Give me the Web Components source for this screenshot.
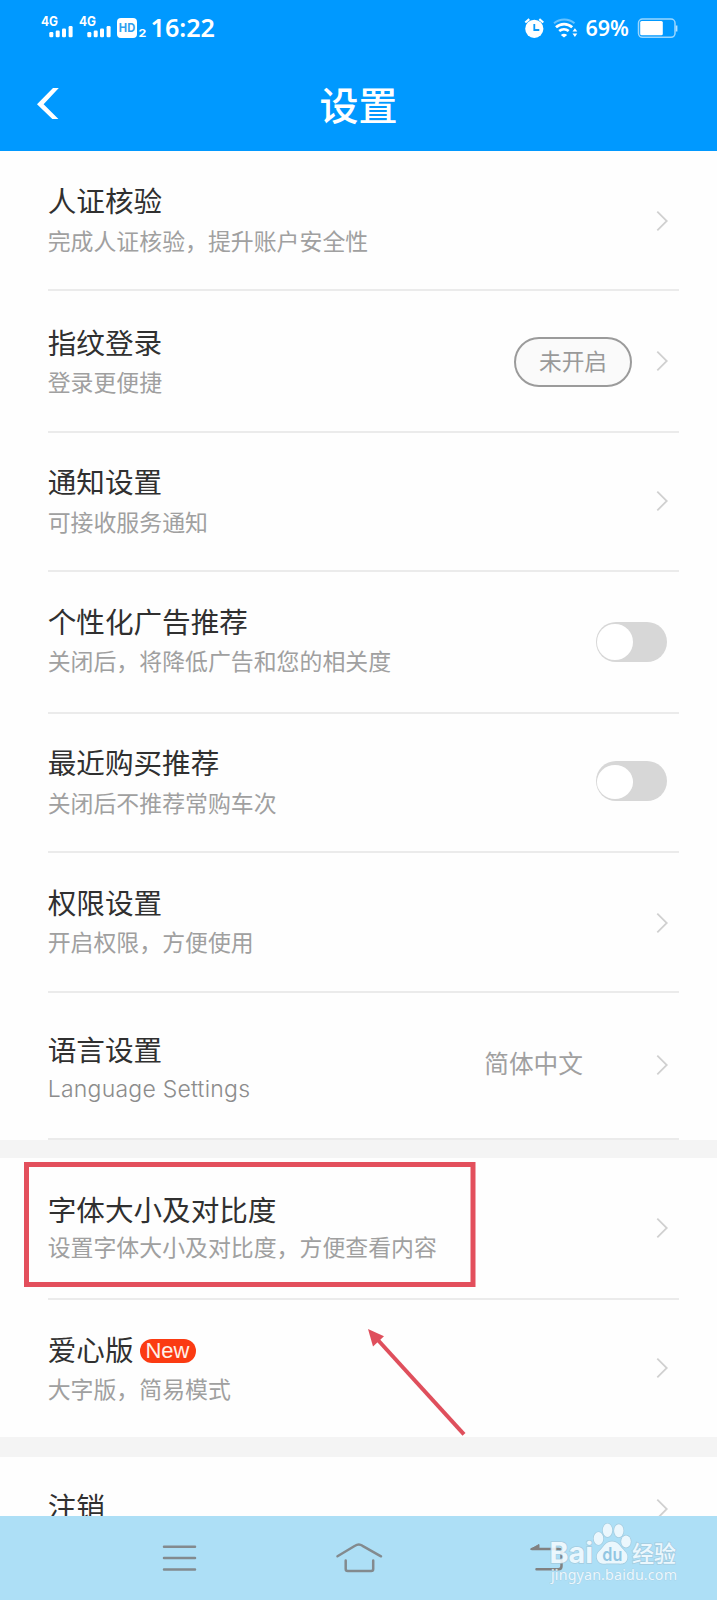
<!DOCTYPE html>
<html lang="zh-CN">
<head>
<meta charset="utf-8">
<title>设置</title>
<style>
html,body{margin:0;padding:0}
body{width:717px;height:1600px;overflow:hidden;background:#fefefe;font-family:"Noto Sans CJK SC",sans-serif}
</style>
</head>
<body>
<settings-screen></settings-screen>
<script>
const define = (name, html) => {
  const t = document.createElement('template');
  t.innerHTML = html;
  customElements.define(name, class extends HTMLElement {
    constructor() {
      super();
      this.attachShadow({ mode: 'open' }).appendChild(t.content.cloneNode(true));
    }
  });
};

define('status-bar', `
<style>
:host{display:flex;justify-content:space-between;height:56px}
svg{display:block}
text{fill:#fff}
</style>
<svg width="230" height="56" fill="#fff">
  <g font-family="Inter,sans-serif" font-weight="700" font-size="12.5">
    <text x="41" y="26.3" textLength="17" lengthAdjust="spacingAndGlyphs">4G</text>
    <text x="79" y="26.3" textLength="17" lengthAdjust="spacingAndGlyphs">4G</text>
  </g>
  <g id="b"><rect x="49.3" y="32" width="4" height="5.3" rx="1.2"/><rect x="55.7" y="30.5" width="4" height="6.8" rx="1.2"/><rect x="62" y="28.5" width="4" height="8.8" rx="1.2"/><rect x="68.6" y="26" width="4" height="11.3" rx="1.2"/></g>
  <use href="#b" x="38"/>
  <rect x="117" y="18" width="20" height="20" rx="4"/>
  <text x="118.8" y="32.2" font-family="Inter,sans-serif" font-weight="700" font-size="12" textLength="16.4" lengthAdjust="spacingAndGlyphs" style="fill:#2f9fee">HD</text>
  <text x="138.4" y="37" font-family="Inter,sans-serif" font-weight="700" font-size="10.8" textLength="7.8" lengthAdjust="spacingAndGlyphs">2</text>
  <text x="150.5" y="36.7" font-family="Noto Sans,sans-serif" font-weight="600" font-size="24.6" textLength="64.5" lengthAdjust="spacingAndGlyphs">16:22</text>
</svg>
<svg width="197" height="56" fill="none" stroke="#fff">
  <circle cx="14.3" cy="28.8" r="9.1" fill="#fff" stroke="none"/>
  <path d="M5.3 22.5l4-3.3M23.3 22.5l-4-3.3" stroke-width="2.2"/>
  <path d="M14.3 24v6h5" stroke="#0a98f8" stroke-width="1.8"/>
  <path d="M34 23.3a15.5 15.5 0 0 1 20.5 0" stroke-width="2" opacity=".4"/>
  <path d="M36 27.2a12 12 0 0 1 16.2 0M39.2 31a7.5 7.5 0 0 1 9.5 0" stroke-width="2.7"/>
  <path d="M40.8 35l3.2 2.6 3.2-2.6a5 5 0 0 0-6.4 0z" fill="#fff" stroke="none"/>
  <path d="M52.5 31.5l2.4-3.3 2.4 3.3zM52.5 33.6l2.4 3.3 2.4-3.3z" fill="#fff" stroke="none"/>
  <text x="65.4" y="36.2" stroke="none" font-family="Noto Sans,sans-serif" font-weight="600" font-size="21" textLength="43.5" lengthAdjust="spacingAndGlyphs">69%</text>
  <rect x="118.5" y="19" width="36.5" height="18.3" rx="4" stroke-width="1.5" opacity=".6"/>
  <rect x="120.2" y="21" width="22.6" height="14.3" rx="1.5" fill="#fff" stroke="none"/>
  <path d="M156.6 25.5v6" stroke-width="1.6" opacity=".7"/>
</svg>`);

define('title-bar', `
<style>
:host{display:grid;grid-template-columns:96px 1fr 96px;align-items:center;height:95px}
h1{margin:-2px 0 0;text-align:center;color:#fff;font-size:39px;line-height:56px;font-weight:500}
svg{display:block}
</style>
<svg width="96" height="95"><path d="M37 48.2L53 32h5.8L43.6 48.2 58.4 63H52.3z" fill="#fff"/></svg>
<h1><slot></slot></h1>`);

define('chevron-mark', `
<style>:host{display:block}svg{display:block}</style>
<svg width="12" height="22"><path d="M1.3 1.6L10.8 11 1.3 20.4" fill="none" stroke="#d0d0d0" stroke-width="1.8"/></svg>`);

define('toggle-switch', `
<style>
:host{display:flex;align-items:center;box-sizing:border-box;width:71.5px;height:40px;padding-left:1.7px;border-radius:20px;background:#d7d7d7;margin-right:1px}
i{width:36.3px;height:var(--knob,36.5px);border-radius:50%;background:#fff;margin-top:var(--drop,0)}
</style><i></i>`);

define('state-pill', `
<style>
:host{display:flex;align-items:center;justify-content:center;box-sizing:border-box;width:118px;height:50px;border:2px solid #9b9b9b;border-radius:25px;background:#fafafa;color:#999;font-size:22.7px;line-height:40px;margin:2px 24px 0 0;padding-bottom:3px}
</style><slot></slot>`);

define('new-badge', `
<style>
:host{display:flex;align-items:center;justify-content:center;width:56px;height:24px;border-radius:12px;background:#fb3b12;color:#fff0e8;font:400 22px/24px "Liberation Sans",sans-serif;margin:3px 0 0 6px}
</style><slot></slot>`);

define('setting-row', `
<style>
:host{display:flex;justify-content:space-between;box-sizing:border-box;height:var(--h);margin:0 38px 0 48px;border-bottom:2px solid var(--line,#ebebeb)}
.text{padding-top:calc(var(--t) - 20.8px);margin-left:-.3px}
.name{display:flex;align-items:center;height:40px;font-size:28.6px;line-height:40px;color:#303030;white-space:nowrap}
.note{font-size:22.9px;line-height:40px;color:#a0a0a0;font-weight:400;margin-top:calc(var(--shift,0px) - .8px);white-space:nowrap}
.side{display:flex;align-items:center;height:50px;margin-top:calc(var(--m) - 25px);padding-right:11px}
</style>
<div class="text"><div class="name"><slot name="name"></slot></div><div class="note"><slot name="note"></slot></div></div>
<div class="side"><slot></slot></div>`);

define('section-gap', `<style>:host{display:block;height:var(--h);background:#f4f4f4}</style>`);

define('nav-bar', `
<style>
:host{display:grid;grid-template-columns:repeat(3,179px);justify-content:center;height:84px;background:#addff6;position:relative}
svg{display:block}
path{fill:none;stroke:#838a8e;stroke-width:2.5;stroke-linecap:round;stroke-linejoin:round}
</style>
<svg width="179" height="84"><path d="M74 30.8h31M74 42h31M74 53.5h31"/></svg>
<svg width="179" height="84"><path d="M68.5 40.3L86 29.8Q89.8 27.2 93.5 29.8L112 40.3M76.7 44.5v8.5q0 2 2 2h23.5q2 0 2-2v-8.5"/></svg>
<svg width="179" height="84"><path d="M84 33h26.5q3 0 3 3v14q0 3.3-3 3.3H88.5" style="stroke:#818181"/><path d="M82.8 33L91 28.5V33z" style="fill:#818181;stroke:#818181;stroke-width:1"/></svg>`);

define('water-mark', `
<style>
:host{position:absolute;left:545px;top:1518px}
svg{display:block}
.w{fill:#f4fbff;stroke:#a3c9dc;stroke-width:1.4;paint-order:stroke}
</style>
<svg width="140" height="72" opacity=".88">
  <g class="w">
    <text x="4.5" y="45.2" font-family="Inter,sans-serif" font-weight="700" font-size="28.5" textLength="43.5" lengthAdjust="spacingAndGlyphs">Bai</text>
    <ellipse cx="53.5" cy="20.5" rx="4.8" ry="6.4"/><ellipse cx="62.5" cy="12.3" rx="4.7" ry="6.7"/><ellipse cx="73.8" cy="12.7" rx="4.7" ry="6.5"/><ellipse cx="81" cy="23.5" rx="4.8" ry="6"/>
    <path d="M67 23.5c-6 0-7.5 4-10.5 7.3-3 3.2-5.5 5.2-4.5 9.7 1.2 5.3 6 5.5 9.5 5h11.5c3.5.5 8.3.2 9.3-5 .9-4.5-2-6.6-4.8-9.7-3-3.3-4.5-7.3-10.500-7.3z"/>
    <text x="87" y="43.5" font-family="Noto Sans CJK SC,sans-serif" font-weight="500" font-size="22.5" textLength="44" lengthAdjust="spacingAndGlyphs">经验</text>
  </g>
  <text x="57.3" y="42.5" font-family="Inter,sans-serif" font-weight="600" font-size="18" fill="#8fc3e0" textLength="20" lengthAdjust="spacingAndGlyphs">du</text>
  <text x="6" y="61.5" class="w" style="stroke-width:.6" font-family="Noto Sans,sans-serif" font-size="14.3" textLength="126" lengthAdjust="spacing">jingyan.baidu.com</text>
</svg>`);

define('guide-marks', `
<style>
:host{position:absolute;left:24px;top:1162px}
svg{display:block}
</style>
<svg width="460" height="280"><rect x="2.5" y="2.5" width="446.5" height="120" fill="none" stroke="#e34f5c" stroke-width="5"/>
<path d="M440 272.3L353 177" stroke="#df4f5c" stroke-width="4" fill="none"/><path d="M344 167l16 7.3-11 10.2z" fill="#df4f5c"/></svg>`);

define('settings-screen', `
<style>
:host{display:flex;flex-direction:column;position:relative;width:717px;height:1600px;overflow:hidden;background:#fefefe}
header{background:#0099ff;height:151px;flex:none}
main{height:1365px;overflow:hidden;flex:none}
</style>
<header><status-bar></status-bar><title-bar>设置</title-bar></header>
<main>
<setting-row style="--h:140px;--t:50px;--shift:.5px;--m:70px"><span slot="name">人证核验</span><span slot="note">完成人证核验，提升账户安全性</span><chevron-mark></chevron-mark></setting-row>
<setting-row style="--h:142px;--t:52px;--m:70px"><span slot="name">指纹登录</span><span slot="note">登录更便捷</span><state-pill>未开启</state-pill><chevron-mark></chevron-mark></setting-row>
<setting-row style="--h:139px;--t:49px;--shift:.5px;--m:68px"><span slot="name">通知设置</span><span slot="note">可接收服务通知</span><chevron-mark></chevron-mark></setting-row>
<setting-row style="--h:142px;--t:50px;--m:70px"><span slot="name">个性化广告推荐</span><span slot="note">关闭后，将降低广告和您的相关度</span><toggle-switch></toggle-switch></setting-row>
<setting-row style="--h:139px;--t:49px;--shift:.5px;--m:67px"><span slot="name">最近购买推荐</span><span slot="note">关闭后不推荐常购车次</span><toggle-switch style="--knob:34px;--drop:2px"></toggle-switch></setting-row>
<setting-row style="--h:140px;--t:50px;--m:69.5px"><span slot="name">权限设置</span><span slot="note">开启权限，方便使用</span><chevron-mark></chevron-mark></setting-row>
<setting-row style="--h:147px;--t:57.2px;--m:72px;--shift:.5px"><span slot="name">语言设置</span><span slot="note" style="display:block;font:300 23px/40px Inter,sans-serif;letter-spacing:.24px;color:#8c8c8c">Language Settings</span><span style="font-size:24.7px;line-height:40px;color:#a0a0a0;margin:-6px 73px 0 0">简体中文</span><chevron-mark></chevron-mark></setting-row>
<section-gap style="--h:18px"></section-gap>
<setting-row style="--h:142px;--t:52px;--m:70px;--shift:-2.5px"><span slot="name">字体大小及对比度</span><span slot="note">设置字体大小及对比度，方便查看内容</span><chevron-mark></chevron-mark></setting-row>
<setting-row style="--h:137px;--t:50px;--m:68px;--line:transparent"><span slot="name">爱心版</span><new-badge slot="name">New</new-badge><span slot="note">大字版，简易模式</span><chevron-mark></chevron-mark></setting-row>
<section-gap style="--h:20px"></section-gap>
<setting-row style="--h:140px;--t:50px;--m:52px"><span slot="name">注销</span><chevron-mark></chevron-mark></setting-row>
</main>
<nav-bar></nav-bar>
<guide-marks></guide-marks>
<water-mark></water-mark>`);
</script>
</body>
</html>
